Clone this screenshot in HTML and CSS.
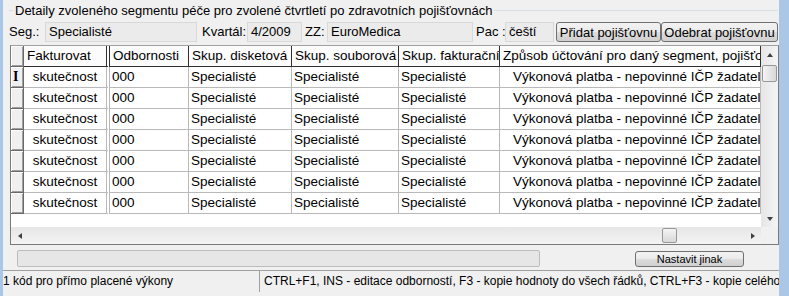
FILE: index.html
```html
<!DOCTYPE html>
<html lang="cs">
  <head>
    <meta charset="UTF-8" />
    <title>Detaily segmentu péče</title>
    <link rel="stylesheet" href="styles.css">
  </head>
  <body>
    <div class="window">
      <div class="group-title">
        <span class="line short"></span>
        <span class="title">Detaily zvoleného segmentu péče pro zvolené čtvrtletí po zdravotních pojišťovnách</span>
        <span class="line"></span>
      </div>

      <div class="info-row">
        <span class="lbl w-seg">Seg.:</span>
        <span class="box w-seg-box">Specialisté</span>
        <span class="lbl w-kv">Kvartál:</span>
        <span class="box w-kv-box">4/2009</span>
        <span class="lbl w-zz">ZZ:</span>
        <span class="box w-zz-box">EuroMedica</span>
        <span class="lbl w-pac">Pac :</span>
        <span class="box w-pac-box">čeští</span>
        <button class="btn w-add">Přidat pojišťovnu</button>
        <button class="btn w-del">Odebrat pojišťovnu</button>
      </div>

      <div class="grid">
        <div class="grid-main">
          <div class="cells">
            <div class="row head">
              <div class="ind"></div>
              <div class="c fakt">Fakturovat</div>
              <div class="c">Odbornosti</div>
              <div class="c">Skup. disketová</div>
              <div class="c">Skup. souborová</div>
              <div class="c">Skup. fakturační</div>
              <div class="c">Způsob účtování pro daný segment, pojišťovnu a čtvrtletí</div>
            </div>
            <div class="row">
              <div class="ind"><span class="caret">I</span></div>
              <div class="c fakt center">skutečnost</div>
              <div class="c">000</div>
              <div class="c">Specialisté</div>
              <div class="c">Specialisté</div>
              <div class="c">Specialisté</div>
              <div class="c zp">Výkonová platba - nepovinné IČP žadatele</div>
            </div>
            <div class="row">
              <div class="ind"></div>
              <div class="c fakt center">skutečnost</div>
              <div class="c">000</div>
              <div class="c">Specialisté</div>
              <div class="c">Specialisté</div>
              <div class="c">Specialisté</div>
              <div class="c zp">Výkonová platba - nepovinné IČP žadatele</div>
            </div>
            <div class="row">
              <div class="ind"></div>
              <div class="c fakt center">skutečnost</div>
              <div class="c">000</div>
              <div class="c">Specialisté</div>
              <div class="c">Specialisté</div>
              <div class="c">Specialisté</div>
              <div class="c zp">Výkonová platba - nepovinné IČP žadatele</div>
            </div>
            <div class="row">
              <div class="ind"></div>
              <div class="c fakt center">skutečnost</div>
              <div class="c">000</div>
              <div class="c">Specialisté</div>
              <div class="c">Specialisté</div>
              <div class="c">Specialisté</div>
              <div class="c zp">Výkonová platba - nepovinné IČP žadatele</div>
            </div>
            <div class="row">
              <div class="ind"></div>
              <div class="c fakt center">skutečnost</div>
              <div class="c">000</div>
              <div class="c">Specialisté</div>
              <div class="c">Specialisté</div>
              <div class="c">Specialisté</div>
              <div class="c zp">Výkonová platba - nepovinné IČP žadatele</div>
            </div>
            <div class="row">
              <div class="ind"></div>
              <div class="c fakt center">skutečnost</div>
              <div class="c">000</div>
              <div class="c">Specialisté</div>
              <div class="c">Specialisté</div>
              <div class="c">Specialisté</div>
              <div class="c zp">Výkonová platba - nepovinné IČP žadatele</div>
            </div>
            <div class="row">
              <div class="ind"></div>
              <div class="c fakt center">skutečnost</div>
              <div class="c">000</div>
              <div class="c">Specialisté</div>
              <div class="c">Specialisté</div>
              <div class="c">Specialisté</div>
              <div class="c zp">Výkonová platba - nepovinné IČP žadatele</div>
            </div>
          </div>
          <div class="vscroll">
            <div class="arrow-box"><span class="tri up"></span></div>
            <div class="vthumb"></div>
            <div class="arrow-box bottom"><span class="tri down"></span></div>
          </div>
        </div>
        <div class="hscroll-row">
          <div class="hscroll">
            <div class="arrow-box"><span class="tri left"></span></div>
            <div class="hthumb"></div>
            <div class="arrow-box"><span class="tri right"></span></div>
          </div>
          <div class="corner"></div>
        </div>
      </div>

      <div class="tools">
        <div class="progress"></div>
        <button class="btn small">Nastavit jinak</button>
      </div>

      <div class="statusbar">
        <div class="panel first">1 kód pro přímo placené výkony</div>
        <div class="panel">CTRL+F1, INS - editace odborností, F3 - kopie hodnoty do všech řádků, CTRL+F3 - kopie celého řádku</div>
      </div>
    </div>
  </body>
</html>
```

FILE: styles.css
```css
body {
  margin: 0;
  background: #f0f0f0;
  font-family: "Liberation Sans", Arial, sans-serif;
  font-size: 13px;
  color: #000;
}
.window {
  width: 789px;
  height: 296px;
  box-sizing: border-box;
  border-left: 3px solid #aac7e7;
  border-right: 10px solid #aac7e7;
  display: flex;
  flex-direction: column;
  overflow: hidden;
}
.group-title {
  display: flex;
  align-items: center;
  height: 15px;
  margin: 3px 1px 0 6px;
}
.group-title .line {
  flex: 1;
  border-top: 1px solid #d5dfe5;
}
.group-title .line.short {
  flex: none;
  width: 4px;
}
.group-title .title {
  padding: 0 2px;
  white-space: nowrap;
}
.info-row {
  display: flex;
  align-items: center;
  height: 21px;
  margin-top: 3px;
  padding-left: 6px;
}
.lbl {
  white-space: nowrap;
}
.box {
  box-sizing: border-box;
  height: 20px;
  line-height: 18px;
  padding-left: 3px;
  background: #ebebeb;
  border: 1px solid #d9d9d9;
  white-space: nowrap;
}
.w-seg { width: 36px; }
.w-seg-box { width: 152px; }
.w-kv { width: 45px; margin-left: 5px; }
.w-kv-box { width: 55px; }
.w-zz { width: 22px; margin-left: 3px; }
.w-zz-box { width: 146px; }
.w-pac { width: 29px; margin-left: 3px; }
.w-pac-box { width: 49px; }
.btn {
  box-sizing: border-box;
  height: 20px;
  padding: 0;
  font-family: "Liberation Sans", Arial, sans-serif;
  font-size: 13px;
  color: #000;
  border: 1px solid #707070;
  border-radius: 3px;
  background: linear-gradient(#f2f2f2 0%, #ebebeb 50%, #dddddd 50%, #cfcfcf 100%);
  white-space: nowrap;
}
.w-add { width: 105px; margin-left: 2px; margin-top: 1px; }
.w-del { width: 117px; margin-top: 1px; }

.grid {
  margin: 3px 1px 0 7px;
  width: 769px;
  height: 200px;
  box-sizing: border-box;
  border: 1px solid #7a7a7a;
  border-top-color: #a0a0a0;
  display: flex;
  flex-direction: column;
  background: #fff;
  font-size: 13.5px;
}
.grid-main {
  display: flex;
  height: 181px;
}
.cells {
  width: 750px;
  overflow: hidden;
}
.row {
  display: grid;
  grid-template-columns: 13px 86px 79px 103px 107px 101px 261px;
  height: 21px;
}
.row > div {
  box-sizing: border-box;
  border-right: 1px solid #b9b9b9;
  border-bottom: 1px solid #b9b9b9;
  overflow: hidden;
  white-space: nowrap;
  line-height: 20px;
}
.c {
  padding-left: 2px;
}
.row .fakt {
  border-right: 4px double #b9b9b9;
}
.center {
  text-align: center;
  padding-left: 0;
}
.zp {
  padding-left: 13px;
}
.row .ind {
  background: #f0f0f0;
  border-right: 1px solid #696969;
  border-bottom: 1px solid #696969;
  box-shadow: inset 1px 1px #fff, inset -1px -1px #a0a0a0;
}
.caret {
  font-family: "Liberation Serif", serif;
  font-weight: bold;
  font-size: 14px;
  padding-left: 2px;
}
.head > div {
  background: #fcfcfc;
  border-right-color: #303030;
  border-bottom-color: #303030;
  padding-left: 3px;
}
.head .fakt {
  border-right: 4px double #303030;
}
.head .ind {
  padding: 0;
}

.vscroll {
  width: 17px;
  display: flex;
  flex-direction: column;
  background: linear-gradient(to right, #e6e6e6, #f4f4f4);
}
.arrow-box {
  width: 17px;
  height: 17px;
  flex: none;
  display: flex;
  align-items: center;
  justify-content: center;
}
.arrow-box.bottom {
  margin-top: auto;
}
.vthumb {
  width: 15px;
  height: 17px;
  margin: 2px 0 0 1px;
  box-sizing: border-box;
  border: 1px solid #979797;
  border-radius: 2px;
  background: linear-gradient(to right, #f4f4f4, #e6e6e6 50%, #d8d8d8);
}
.tri {
  width: 0;
  height: 0;
  border: 0 solid transparent;
}
.tri.up {
  border-width: 0 3.5px 4px;
  border-bottom-color: #404040;
}
.tri.down {
  border-width: 4px 3.5px 0;
  border-top-color: #404040;
}
.tri.left {
  border-width: 3.5px 4px 3.5px 0;
  border-right-color: #404040;
}
.tri.right {
  border-width: 3.5px 0 3.5px 4px;
  border-left-color: #404040;
}
.hscroll-row {
  display: flex;
  height: 17px;
}
.hscroll {
  width: 750px;
  display: flex;
  background: linear-gradient(#e6e6e6, #f4f4f4);
}
.hthumb {
  width: 15px;
  height: 15px;
  margin: 1px 67px 0 auto;
  box-sizing: border-box;
  border: 1px solid #979797;
  border-radius: 2px;
  background: linear-gradient(#f4f4f4, #e6e6e6 50%, #d8d8d8);
}
.corner {
  width: 17px;
  background: #f0f0f0;
}

.tools {
  display: flex;
  height: 17px;
  margin-top: 5px;
}
.progress {
  width: 523px;
  margin-left: 14px;
  box-sizing: border-box;
  border: 1px solid #bcbcbc;
  border-radius: 2px;
  background: #e6e6e6;
}
.btn.small {
  width: 109px;
  height: 16px;
  margin: 1px 0 0 95px;
  font-size: 11px;
  line-height: 14px;
}
.statusbar {
  display: flex;
  height: 21px;
  margin-top: 3px;
  border-top: 1px solid #a0a0a0;
  font-size: 12px;
}
.panel {
  line-height: 21px;
  white-space: nowrap;
  overflow: hidden;
  padding-left: 4px;
}
.panel.first {
  width: 256px;
  flex: none;
  padding-left: 0;
  border-right: 1px solid #a0a0a0;
}
```
